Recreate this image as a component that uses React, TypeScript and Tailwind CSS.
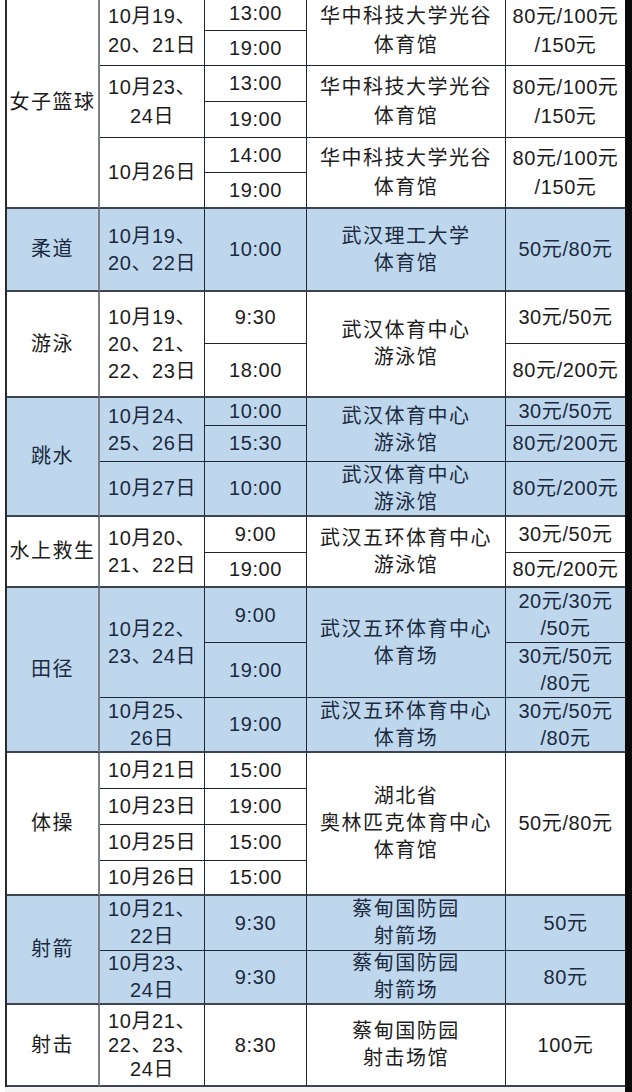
import React from 'react';

type Row = {
  date?: string[];
  ds?: number;
  time?: string;
  venue?: string[];
  vs?: number;
  price?: string[];
  ps?: number;
  dateLh?: string;
};

type Section = { sport: string; blue: boolean; lh?: string; rows: Row[] };

const span: Record<number, string> = {
  1: '',
  2: 'row-span-2',
  3: 'row-span-3',
  4: 'row-span-4',
  6: 'row-span-6',
};

const hzkd = ['华中科技大学光谷', '体育馆'];
const hzPrice = ['80元/100元', '/150元'];

const sections: Section[] = [
  {
    sport: '女子篮球',
    blue: false,
    lh: 'leading-[29px]',
    rows: [
      { date: ['10月19、', '20、21日'], ds: 2, time: '13:00', venue: hzkd, vs: 2, price: hzPrice, ps: 2 },
      { time: '19:00' },
      { date: ['10月23、', '24日'], ds: 2, time: '13:00', venue: hzkd, vs: 2, price: hzPrice, ps: 2 },
      { time: '19:00' },
      { date: ['10月26日'], ds: 2, time: '14:00', venue: hzkd, vs: 2, price: hzPrice, ps: 2 },
      { time: '19:00' },
    ],
  },
  {
    sport: '柔道',
    blue: true,
    rows: [{ date: ['10月19、', '20、22日'], time: '10:00', venue: ['武汉理工大学', '体育馆'], price: ['50元/80元'] }],
  },
  {
    sport: '游泳',
    blue: false,
    rows: [
      { date: ['10月19、', '20、21、', '22、23日'], ds: 2, time: '9:30', venue: ['武汉体育中心', '游泳馆'], vs: 2, price: ['30元/50元'] },
      { time: '18:00', price: ['80元/200元'] },
    ],
  },
  {
    sport: '跳水',
    blue: true,
    rows: [
      { date: ['10月24、', '25、26日'], ds: 2, time: '10:00', venue: ['武汉体育中心', '游泳馆'], vs: 2, price: ['30元/50元'] },
      { time: '15:30', price: ['80元/200元'] },
      { date: ['10月27日'], time: '10:00', venue: ['武汉体育中心', '游泳馆'], price: ['80元/200元'] },
    ],
  },
  {
    sport: '水上救生',
    blue: false,
    rows: [
      { date: ['10月20、', '21、22日'], ds: 2, time: '9:00', venue: ['武汉五环体育中心', '游泳馆'], vs: 2, price: ['30元/50元'] },
      { time: '19:00', price: ['80元/200元'] },
    ],
  },
  {
    sport: '田径',
    blue: true,
    rows: [
      { date: ['10月22、', '23、24日'], ds: 2, time: '9:00', venue: ['武汉五环体育中心', '体育场'], vs: 2, price: ['20元/30元', '/50元'] },
      { time: '19:00', price: ['30元/50元', '/80元'] },
      { date: ['10月25、', '26日'], time: '19:00', venue: ['武汉五环体育中心', '体育场'], price: ['30元/50元', '/80元'] },
    ],
  },
  {
    sport: '体操',
    blue: false,
    rows: [
      { date: ['10月21日'], time: '15:00', venue: ['湖北省', '奥林匹克体育中心', '体育馆'], vs: 4, price: ['50元/80元'], ps: 4 },
      { date: ['10月23日'], time: '19:00' },
      { date: ['10月25日'], time: '15:00' },
      { date: ['10月26日'], time: '15:00' },
    ],
  },
  {
    sport: '射箭',
    blue: true,
    rows: [
      { date: ['10月21、', '22日'], time: '9:30', venue: ['蔡甸国防园', '射箭场'], price: ['50元'] },
      { date: ['10月23、', '24日'], time: '9:30', venue: ['蔡甸国防园', '射箭场'], price: ['80元'] },
    ],
  },
  {
    sport: '射击',
    blue: false,
    rows: [
      { date: ['10月21、', '22、23、', '24日'], dateLh: 'leading-[24px]', time: '8:30', venue: ['蔡甸国防园', '射击场馆'], price: ['100元'] },
    ],
  },
];

function Cell({
  lines,
  n,
  bottom,
  last,
  first,
  blue,
  lh,
  cjk,
}: {
  lines: string[];
  n: number;
  bottom: boolean;
  last?: boolean;
  first?: boolean;
  blue: boolean;
  lh?: string;
  cjk?: boolean;
}) {
  return (
    <div
      className={`${span[n]} flex flex-col items-center justify-center text-center whitespace-nowrap ${
        lh ?? 'leading-[27px]'
      } ${cjk ? 'tracking-[1.5px]' : 'tracking-[0.6px]'} ${blue ? 'bg-[#bfd7ec] text-[#1b2a3e]' : 'bg-white text-[#1c1c1c]'} ${
        first ? 'border-r-2 border-r-[#7d8288]' : last ? '' : 'border-r border-r-[#1f2633]'
      } ${bottom ? 'border-b-2 border-b-[#3d4450]' : 'border-b border-b-[#1f2633]'}`}
    >
      {lines.map((l, i) => (
        <span key={i}>{l}</span>
      ))}
    </div>
  );
}

export default function App() {
  const cells: React.ReactNode[] = [];
  sections.forEach((sec, si) => {
    const total = sec.rows.length;
    sec.rows.forEach((r, ri) => {
      const end = (s: number) => ri + s >= total;
      const k = `${si}-${ri}`;
      if (ri === 0)
        cells.push(<Cell key={k + 's'} lines={[sec.sport]} n={total} bottom first blue={sec.blue} cjk />);
      if (r.date)
        cells.push(
          <Cell key={k + 'd'} lines={r.date} n={r.ds ?? 1} bottom={end(r.ds ?? 1)} blue={sec.blue} lh={r.dateLh ?? sec.lh} />
        );
      if (r.time) cells.push(<Cell key={k + 't'} lines={[r.time]} n={1} bottom={end(1)} blue={sec.blue} lh={sec.lh} />);
      if (r.venue)
        cells.push(
          <Cell key={k + 'v'} lines={r.venue} n={r.vs ?? 1} bottom={end(r.vs ?? 1)} blue={sec.blue} lh={sec.lh} cjk />
        );
      if (r.price)
        cells.push(
          <Cell key={k + 'p'} lines={r.price} n={r.ps ?? 1} bottom={end(r.ps ?? 1)} last blue={sec.blue} lh={sec.lh} />
        );
    });
  });

  return (
    <div className="flex h-[1092px] w-[632px] overflow-hidden bg-[#f4f4f4] font-['Liberation_Sans','Noto_Sans_CJK_SC',sans-serif] text-[20px]">
      <div className="w-[5px] shrink-0 bg-white" />
      <div className="-mt-[3px] grid h-[1090px] shrink-0 grid-cols-[93px_105px_102px_199px_119px] grid-rows-[34px_35px_36px_36px_35px_36px_83px_52px_54px_28px_36px_55px_36px_35px_55px_55px_55px_36px_36px_36px_35px_55px_54px_82px] border-l-2 border-l-[#2a2a2a]">
        {cells}
      </div>
      <div className="w-[7px] shrink-0 bg-[#0a0a0a]" />
    </div>
  );
}
